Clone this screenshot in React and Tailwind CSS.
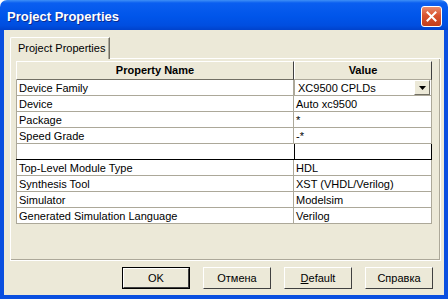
import { useState } from 'react';

const rowsTop = [
  ['Device Family', 'XC9500 CPLDs', true],
  ['Device', 'Auto xc9500'],
  ['Package', '*'],
  ['Speed Grade', '-*'],
];

const rowsBottom = [
  ['Top-Level Module Type', 'HDL'],
  ['Synthesis Tool', 'XST (VHDL/Verilog)'],
  ['Simulator', 'Modelsim'],
  ['Generated Simulation Language', 'Verilog'],
];

function Row({ name, value, combo }) {
  return (
    <div className="flex h-[16px] bg-white border-b border-[#aca899]">
      <div className="w-[278px] border-l border-r border-[#aca899] pl-[2px] leading-[16px]">{name}</div>
      <div className="w-[138px] border-r border-[#aca899] leading-[16px]">
        {combo ? (
          <div className="flex h-[16px] -mt-px bg-white border-t border-l border-[#aca899] pl-[3px] pr-[1px]">
            <span className="flex-1 leading-[16px]">{value}</span>
            <div className="w-[16px] h-[15px] flex items-center justify-center bg-[#ece9d8] border-t border-l border-white border-r border-b border-r-[#716f64] border-b-[#716f64]">
              <svg width="7" height="4" viewBox="0 0 7 4"><path d="M0 0h7L3.5 4z" fill="#000" /></svg>
            </div>
          </div>
        ) : (
          <span className="pl-[2px]">{value}</span>
        )}
      </div>
    </div>
  );
}

function Btn({ children, def }) {
  return (
    <div className={`w-[68px] h-[22px] ${def ? 'border border-black' : ''}`}>
      <div className="h-full flex items-center justify-center bg-[#ece9d8] border border-white border-r-[#404040] border-b-[#404040]">
        {children}
      </div>
    </div>
  );
}

export default function App() {
  const [tab] = useState('Project Properties');
  return (
    <div className="w-[448px] h-[299px] flex flex-col bg-white text-[11px] text-black font-['Liberation_Sans',Arial,sans-serif]">
      <div className="h-[30px] flex items-center justify-between pt-[3px] pl-[7px] pr-[6px] rounded-t-[7px] bg-[linear-gradient(to_bottom,#3e8ff6_0%,#0a5ef0_10%,#0055ea_55%,#004ee0_85%,#0042cc_100%)]">
        <span className="text-white font-bold text-[13px] [text-shadow:1px_1px_0_#0b2a8f]">Project Properties</span>
        <div className="w-[21px] h-[21px] rounded-[3px] border border-white flex items-center justify-center bg-[linear-gradient(to_bottom,#e88a6c,#d9532f_45%,#c23e1c)]">
          <svg width="11" height="11" viewBox="0 0 11 11">
            <path d="M1.5 1.5l8 8M9.5 1.5l-8 8" stroke="#fff" strokeWidth="2" strokeLinecap="square" />
          </svg>
        </div>
      </div>
      <div className="flex-1 flex flex-col bg-[#ece9d8] border-x-4 border-b-4 border-[#0a4fe0] pt-[7px] pl-[6px] pr-[3px]">
        <div className="flex h-[22px]">
          <div className="w-[100px] h-[22px] flex bg-[#ece9d8] border-t border-l border-white rounded-tl-[2px] border-r border-r-[#716f64]">
            <div className="flex-1 flex items-center pl-[7px] border-r border-[#aca899]">{tab}</div>
          </div>
          <div className="flex-1 border-b border-white" />
        </div>
        <div className="w-[431px] h-[202px] border-l border-white border-r border-b border-[#716f64] border-l-white">
          <div className="h-full border-r border-b border-[#aca899] pl-[5px] pt-[2px]">
            <div className="w-[416px]">
              <div className="flex h-[19px] font-bold">
                <div className="w-[278px] flex items-center justify-center border border-white border-r-[#404040] border-b-[#716f64]">Property Name</div>
                <div className="w-[138px] flex items-center justify-center border border-white border-r-[#404040] border-b-[#716f64]">Value</div>
              </div>
              {rowsTop.map(r => <Row key={r[0]} name={r[0]} value={r[1]} combo={r[2]} />)}
              <div className="flex h-[16px] bg-white border-b border-black">
                <div className="w-[278px] border-l border-[#aca899]" />
                <div className="w-[138px] border-l border-r border-black" />
              </div>
              {rowsBottom.map(r => <Row key={r[0]} name={r[0]} value={r[1]} />)}
            </div>
          </div>
        </div>
        <div className="flex justify-end gap-[13px] mt-[6px] pr-[8px]">
          <Btn def>OK</Btn>
          <Btn>Отмена</Btn>
          <Btn><span><span className="underline">D</span>efault</span></Btn>
          <Btn>Справка</Btn>
        </div>
      </div>
    </div>
  );
}
